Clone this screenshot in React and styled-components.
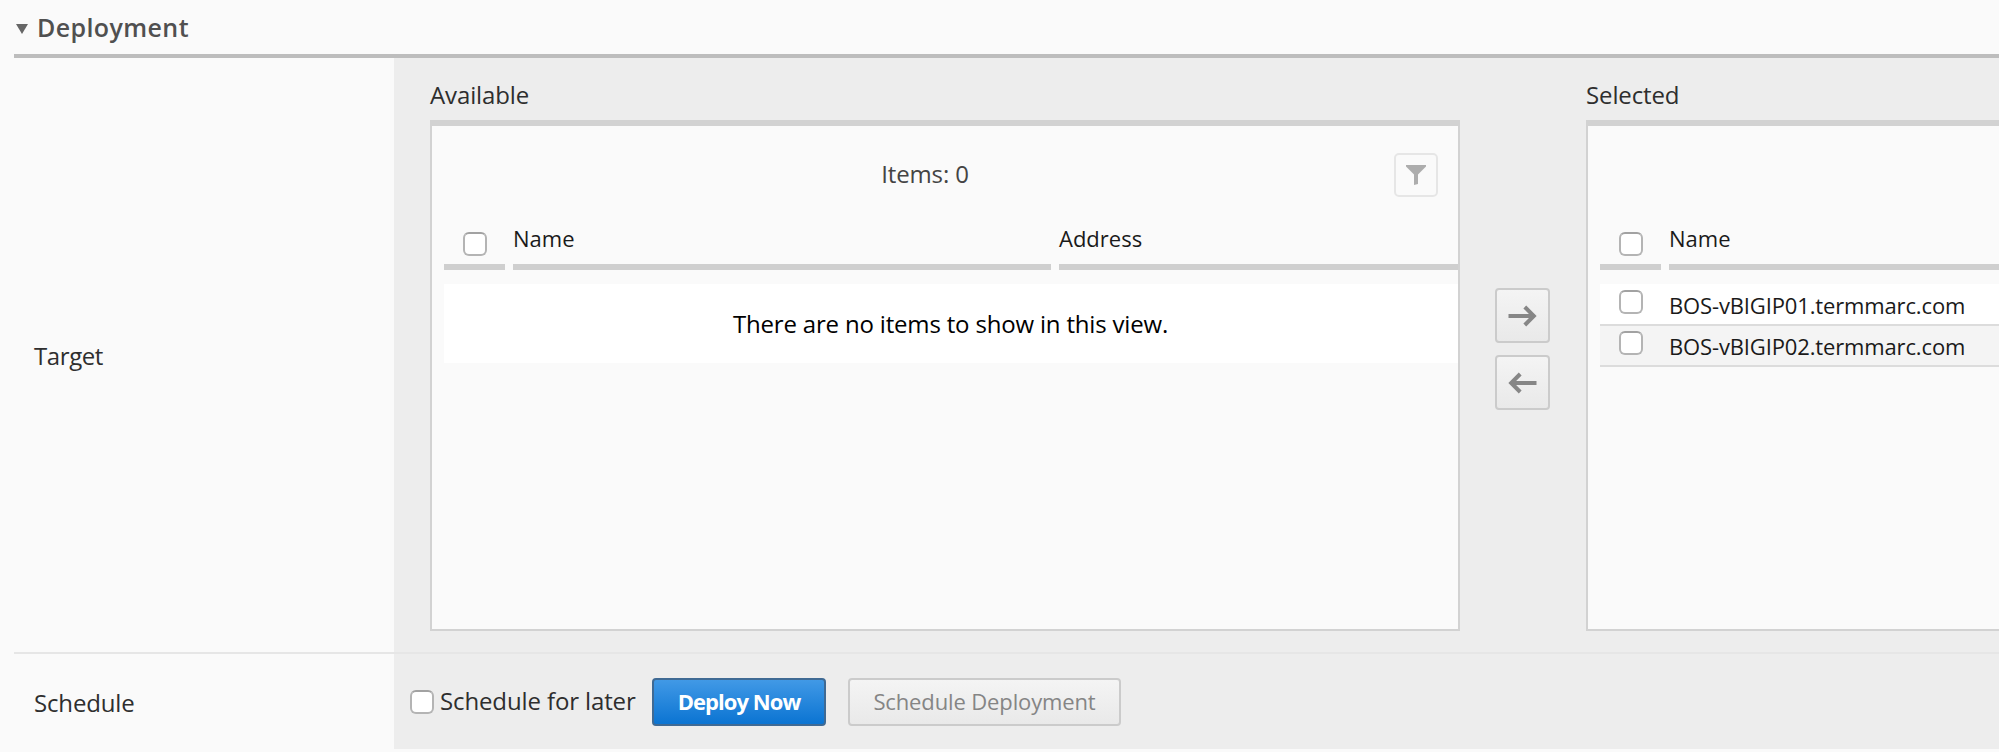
import React from "react";
import styled, { createGlobalStyle } from "styled-components";

const Global = createGlobalStyle`
  * { box-sizing: border-box; }
  html, body { margin: 0; padding: 0; background: #fafafa; overflow: hidden; }
  body { font-family: "Open Sans", "Liberation Sans", sans-serif; font-size: 24px; color: #2e2e2e; }
  button { font-family: inherit; padding: 0; margin: 0; }
`;

const Page = styled.main`
  width: 1999px;
  height: 752px;
  overflow: hidden;
  padding-left: 14px;
  background: #fafafa;
`;

const SectionHeader = styled.header`
  display: flex;
  align-items: flex-start;
  height: 58px;
  padding-top: 11px;
  border-bottom: 4px solid #bdbdbd;
`;

const Caret = styled.svg`
  width: 12px;
  height: 10px;
  margin: 13px 9px 0 2px;
  flex: none;
`;

const Title = styled.h2`
  margin: 0;
  font-size: 25px;
  line-height: 32px;
  font-weight: 600;
  color: #505050;
  letter-spacing: 0.4px;
`;

const FormRow = styled.section`
  display: flex;
  height: ${(p) => p.$height}px;
  border-bottom: ${(p) => (p.$ruled ? "2px solid #e6e6e6" : "none")};
`;

const RowLabel = styled.div`
  flex: none;
  display: flex;
  align-items: center;
  width: 380px;
  padding: 2px 0 0 20px;
  line-height: 32px;
  letter-spacing: ${(p) => p.$track || 0}px;
`;

const RowContent = styled.div`
  flex: 1;
  min-width: 0;
  display: flex;
  align-items: ${(p) => p.$align || "flex-start"};
  padding: ${(p) => p.$pad};
  background: #ededed;
`;

const ListColumn = styled.div`
  flex: none;
  width: 1030px;
`;

const ListTitle = styled.div`
  height: 42px;
  padding-top: 1px;
  line-height: 32px;
  letter-spacing: -0.12px;
`;

const Panel = styled.div`
  height: 511px;
  overflow: hidden;
  border: 2px solid #d2d2d2;
  border-top-width: 6px;
  background: #fafafa;
`;

const PanelBar = styled.div`
  display: grid;
  grid-template-columns: 1fr auto;
  align-items: center;
  height: 98px;
  padding: 0 20px 0 13px;
`;

const ItemCount = styled.div`
  text-align: center;
  padding: 0 0 2px 11px;
  line-height: 32px;
  letter-spacing: -0.15px;
  color: #444;
`;

const FilterButton = styled.button`
  display: flex;
  align-items: center;
  justify-content: center;
  width: 44px;
  height: 44px;
  border: 2px solid #e6e6e6;
  border-radius: 5px;
  background: #fafafa;
`;

const Table = styled.div`
  margin-left: 12px;
  font-size: 22px;
  color: #1a1a1a;
`;

const HeadRow = styled.div`
  display: grid;
  grid-template-columns: ${(p) => (p.$wide ? "61px 1fr" : "61px 538px 420px")};
  column-gap: 8px;
  height: 46px;
  margin-bottom: 14px;
`;

const HeadCell = styled.div`
  display: flex;
  align-items: flex-start;
  justify-content: ${(p) => (p.$check ? "center" : "flex-start")};
  padding: ${(p) => (p.$check ? "8px 0 0 1px" : "0")};
  border-bottom: 6px solid #cfcfcf;
  line-height: 29px;
`;

const Check = styled.input.attrs({ type: "checkbox" })`
  appearance: none;
  flex: none;
  width: 24px;
  height: 24px;
  margin: 0;
  border: 2px solid #b4b4b4;
  border-top-color: #a2a2a2;
  border-radius: 6px;
  background: #fff;
`;

const EmptyRow = styled.div`
  display: flex;
  align-items: center;
  justify-content: center;
  height: 79px;
  padding-right: 1px;
  background: #fff;
  color: #000;
  font-size: 24px;
  letter-spacing: -0.18px;
`;

const ItemRow = styled.div`
  display: grid;
  grid-template-columns: 61px 1fr;
  column-gap: 8px;
  height: ${(p) => (p.$alt ? 41 : 42)}px;
  border-bottom: 2px solid #dcdcdc;
  background: ${(p) => (p.$alt ? "#f4f4f4" : "#fff")};
`;

const ItemCheck = styled.div`
  display: flex;
  justify-content: center;
  padding: ${(p) => (p.$alt ? 5 : 6)}px 0 0 1px;
`;

const ItemName = styled.div`
  padding-top: ${(p) => (p.$alt ? 5 : 6)}px;
  line-height: 30px;
  letter-spacing: -0.14px;
`;

const MoveColumn = styled.div`
  flex: none;
  display: flex;
  flex-direction: column;
  align-items: center;
  gap: 12px;
  width: 126px;
  padding: 210px 1px 0 0;
`;

const MoveButton = styled.button`
  display: flex;
  align-items: center;
  justify-content: center;
  width: 55px;
  height: 55px;
  border: 2px solid #cbcbcb;
  border-radius: 4px;
  background: linear-gradient(#f4f4f4, #e9e9e9);
`;

const LaterLabel = styled.label`
  display: flex;
  align-items: center;
  gap: 6px;
  width: 242px;
  line-height: 32px;
  letter-spacing: -0.12px;
`;

const LaterText = styled.span`
  padding-bottom: 2px;
`;

const Button = styled.button`
  height: 48px;
  width: ${(p) => p.$width}px;
  margin-right: 22px;
  padding-bottom: 2px;
  border: 2px solid ${(p) => (p.$primary ? "#3f6a94" : "#cbcbcb")};
  border-radius: 4px;
  background: ${(p) => (p.$primary ? "linear-gradient(#4199e6, #0b74d2)" : "linear-gradient(#f4f4f4, #e9e9e9)")};
  color: ${(p) => (p.$primary ? "#fff" : "#858585")};
  font-size: 22px;
  font-weight: ${(p) => (p.$primary ? 700 : 400)};
  letter-spacing: ${(p) => (p.$primary ? -0.95 : -0.13)}px;
`;

const Arrow = ({ left }) => (
  <svg width="29" height="22" viewBox="0 0 29 22" fill="none" stroke="#868686" strokeWidth="4">
    {left ? <path d="M28.5 11H3M12.2 2L3.2 11l9 9" /> : <path d="M.5 11H26M16.8 2l9 9-9 9" />}
  </svg>
);

const TransferPanel = ({ title, items, count, columns }) => (
  <ListColumn>
    <ListTitle>{title}</ListTitle>
    <Panel>
      <PanelBar>
        {count && <ItemCount>{count}</ItemCount>}
        {count && (
          <FilterButton aria-label="Filter">
            <svg width="20" height="20" viewBox="0 0 20 20">
              <path d="M0 0h20v1.5L12 9.5V19l-4 1V9.5L0 1.5z" fill="#adadad" />
            </svg>
          </FilterButton>
        )}
      </PanelBar>
      <Table>
        <HeadRow $wide={columns.length === 1}>
          <HeadCell $check><Check /></HeadCell>
          {columns.map((c) => <HeadCell key={c}>{c}</HeadCell>)}
        </HeadRow>
        {items.length === 0 && <EmptyRow>There are no items to show in this view.</EmptyRow>}
        {items.map((name, i) => (
          <ItemRow key={name} $alt={i % 2 === 1}>
            <ItemCheck $alt={i % 2 === 1}><Check /></ItemCheck>
            <ItemName $alt={i % 2 === 1}>{name}</ItemName>
          </ItemRow>
        ))}
      </Table>
    </Panel>
  </ListColumn>
);

export default function App() {
  return (
    <>
      <Global />
      <Page>
        <SectionHeader>
          <Caret viewBox="0 0 12 10"><path d="M0 0h12L6 10z" fill="#666" /></Caret>
          <Title>Deployment</Title>
        </SectionHeader>
        <FormRow $height={596} $ruled>
          <RowLabel $track={-0.4}>Target</RowLabel>
          <RowContent $pad="20px 0 0 36px">
            <TransferPanel title="Available" columns={["Name", "Address"]} items={[]} count="Items: 0" />
            <MoveColumn>
              <MoveButton aria-label="Add"><Arrow /></MoveButton>
              <MoveButton aria-label="Remove"><Arrow left /></MoveButton>
            </MoveColumn>
            <TransferPanel
              title="Selected"
              columns={["Name"]}
              items={["BOS-vBIGIP01.termmarc.com", "BOS-vBIGIP02.termmarc.com"]}
            />
          </RowContent>
        </FormRow>
        <FormRow $height={95}>
          <RowLabel $track={-0.15}>Schedule</RowLabel>
          <RowContent $align="center" $pad="0 0 0 16px">
            <LaterLabel><Check /><LaterText>Schedule for later</LaterText></LaterLabel>
            <Button $primary $width={174}>Deploy Now</Button>
            <Button $width={273}>Schedule Deployment</Button>
          </RowContent>
        </FormRow>
      </Page>
    </>
  );
}
